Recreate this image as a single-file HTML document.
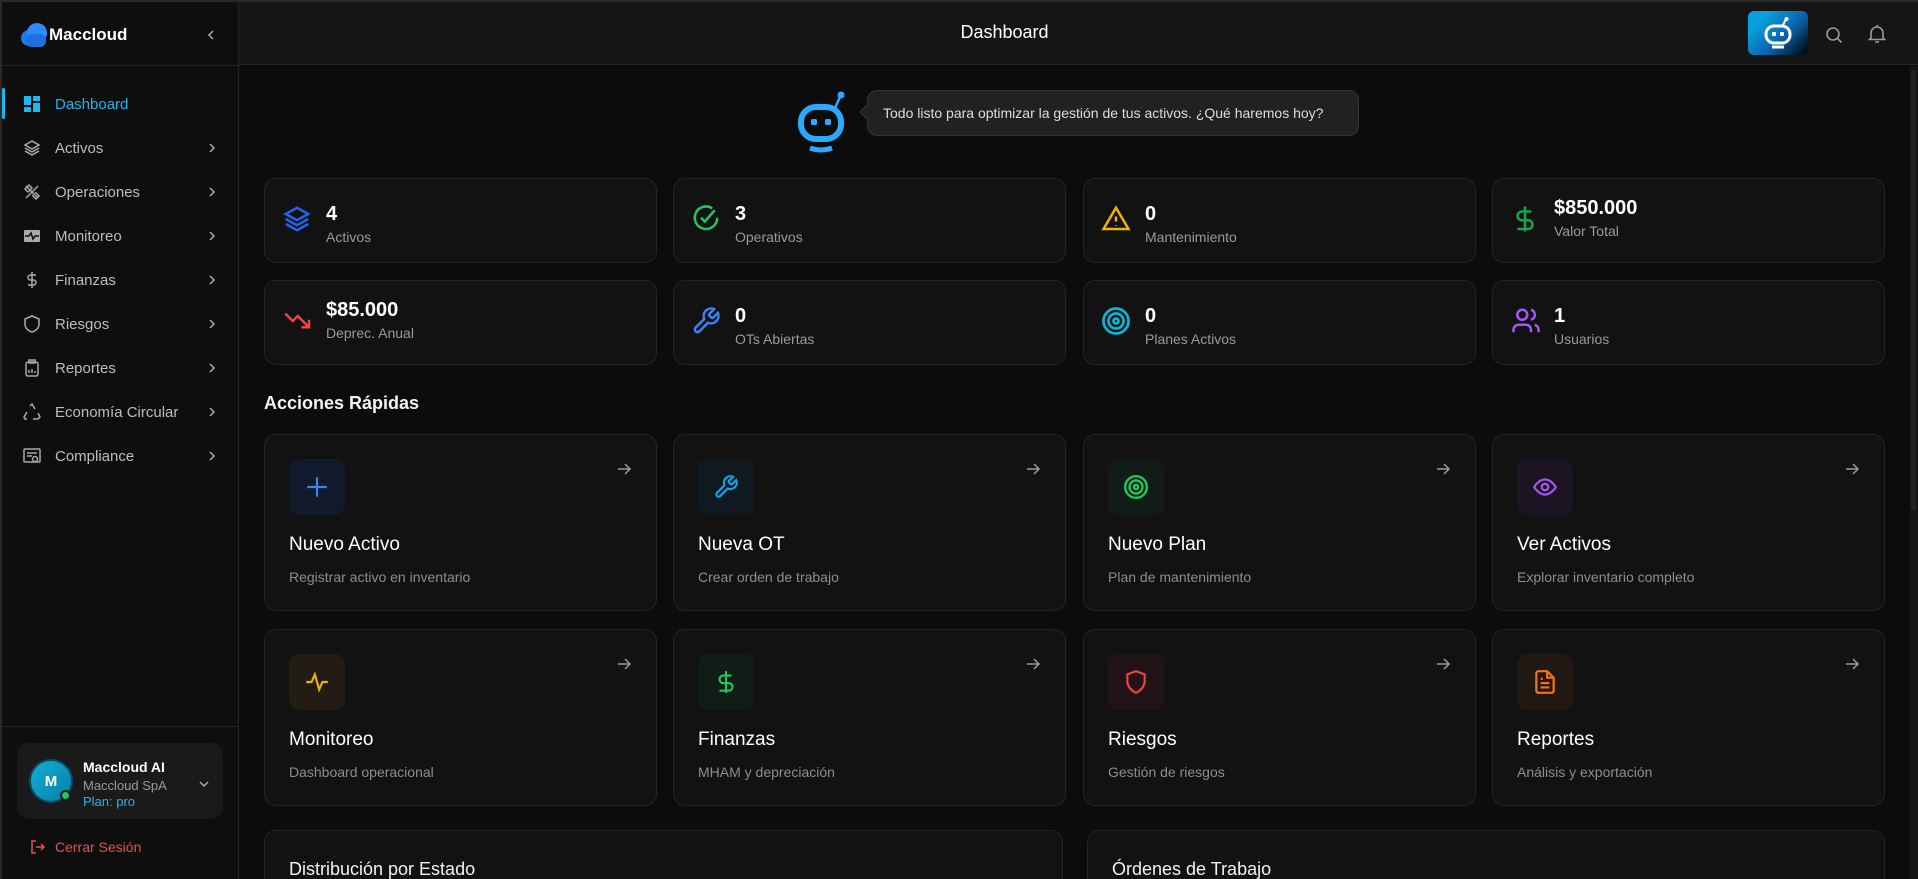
<!DOCTYPE html>
<html><head><meta charset="utf-8"><style>
*{box-sizing:border-box;margin:0;padding:0}
html,body{width:1918px;height:879px;overflow:hidden}
body{background:#0c0c0c;font-family:"Liberation Sans",sans-serif;color:#fff}
#wrap{position:relative;width:1918px;height:879px;overflow:hidden}
.abs{position:absolute}
#side{left:0;top:0;width:239px;height:879px;background:#0e0e0e;border-right:1px solid #222;border-top:2px solid #2a2a2a;border-left:2px solid #2a2a2a}
#hdr{left:239px;top:0;width:1679px;height:65px;background:#151515;border-bottom:1px solid #262626;border-top:2px solid #2a2a2a}
.nav{position:absolute;left:0;width:237px;height:40px;display:flex;align-items:center;font-size:15px;color:#bdbdbd}
.nav svg{position:absolute;left:21px}
.nav span{position:absolute;left:53px}
.nav .ch{position:absolute;left:204px}
.card{position:absolute;background:#121212;border:1px solid #242424;border-radius:12px}
.stat .num{position:absolute;left:61px;font-size:20px;font-weight:bold;color:#fff}
.stat .lbl{position:absolute;left:61px;font-size:14px;color:#9a9a9a}
.stat svg{position:absolute;left:17px;top:25px}
.act .ib{position:absolute;left:24px;top:24px;width:56px;height:56px;border-radius:10px;display:flex;align-items:center;justify-content:center}
.act .t{position:absolute;left:24px;top:99px;font-size:19px;color:#fff}
.act .d{position:absolute;left:24px;top:134px;font-size:14px;color:#8d8d8d}
.act .ar{position:absolute;right:24px;top:26px}
</style></head><body><div id="wrap">
<div id="side" class="abs">
  <svg class="abs" style="left:18px;top:20px" width="30" height="26" viewBox="0 0 30 26"><circle cx="9" cy="16" r="8" fill="#1a7cf0"/><circle cx="17" cy="11" r="10" fill="#2b8cff"/><rect x="6" y="12" width="20" height="13" rx="6" fill="#1e6fe0"/></svg>
  <div class="abs" style="left:47px;top:23px;font-size:17px;font-weight:bold">Maccloud</div>
  <svg class="abs" style="left:203px;top:27px" width="12" height="12" viewBox="0 0 12 12"><path d="M8 2L4 6l4 4" stroke="#aaa" stroke-width="1.5" fill="none"/></svg>
  <div class="abs" style="left:0;top:63px;width:237px;height:1px;background:#262626"></div>
  <div class="abs" style="left:0;top:86px;width:3px;height:31px;background:#1ab8f0;border-radius:2px"></div>
  <div class="nav" style="top:82px;color:#1ab8f0"><svg width="18" height="18" viewBox="0 0 18 18"><rect x="1" y="1" width="7" height="9" fill="#1ab8f0"/><rect x="10" y="1" width="7" height="5" fill="#1ab8f0"/><rect x="1" y="12" width="7" height="5" fill="#1ab8f0"/><rect x="10" y="8" width="7" height="9" fill="#1ab8f0"/></svg><span>Dashboard</span></div>
  <div class="nav" style="top:126px"><svg width="18" height="18" viewBox="0 0 18 18" fill="none" stroke="#aaa" stroke-width="1.5"><path d="M9 2L2 6l7 4 7-4zM2 9l7 4 7-4M2 12l7 4 7-4"/></svg><span>Activos</span><svg class="ch" width="12" height="12" viewBox="0 0 12 12"><path d="M4 2l4 4-4 4" stroke="#aaa" stroke-width="1.5" fill="none"/></svg></div>
  <div class="nav" style="top:170px"><svg width="18" height="18" viewBox="0 0 18 18" fill="none" stroke="#aaa" stroke-width="1.5"><path d="M3 3l12 12M15 3L3 15M2 6l4-4 3 3-4 4zM12 9l4 4-3 3-4-4"/></svg><span>Operaciones</span><svg class="ch" width="12" height="12" viewBox="0 0 12 12"><path d="M4 2l4 4-4 4" stroke="#aaa" stroke-width="1.5" fill="none"/></svg></div>
  <div class="nav" style="top:214px"><svg width="18" height="18" viewBox="0 0 18 18"><rect x="1" y="3" width="16" height="12" rx="1" fill="#aaa"/><path d="M2 9h4l2-3 2 6 2-3h4" stroke="#0e0e0e" stroke-width="1.5" fill="none"/></svg><span>Monitoreo</span><svg class="ch" width="12" height="12" viewBox="0 0 12 12"><path d="M4 2l4 4-4 4" stroke="#aaa" stroke-width="1.5" fill="none"/></svg></div>
  <div class="nav" style="top:258px"><svg width="18" height="18" viewBox="0 0 18 18" fill="none" stroke="#aaa" stroke-width="1.5"><path d="M9 1v16M13 4H7.5a2.5 2.5 0 000 5h3a2.5 2.5 0 010 5H5"/></svg><span>Finanzas</span><svg class="ch" width="12" height="12" viewBox="0 0 12 12"><path d="M4 2l4 4-4 4" stroke="#aaa" stroke-width="1.5" fill="none"/></svg></div>
  <div class="nav" style="top:302px"><svg width="18" height="18" viewBox="0 0 18 18" fill="none" stroke="#aaa" stroke-width="1.5"><path d="M9 1l7 3v5c0 4-3 7-7 8-4-1-7-4-7-8V4z"/></svg><span>Riesgos</span><svg class="ch" width="12" height="12" viewBox="0 0 12 12"><path d="M4 2l4 4-4 4" stroke="#aaa" stroke-width="1.5" fill="none"/></svg></div>
  <div class="nav" style="top:346px"><svg width="18" height="18" viewBox="0 0 18 18" fill="none" stroke="#aaa" stroke-width="1.5"><rect x="3" y="3" width="12" height="14" rx="2"/><rect x="6" y="1" width="6" height="3"/><path d="M6 14v-3M9 14v-4M12 14v-2"/></svg><span>Reportes</span><svg class="ch" width="12" height="12" viewBox="0 0 12 12"><path d="M4 2l4 4-4 4" stroke="#aaa" stroke-width="1.5" fill="none"/></svg></div>
  <div class="nav" style="top:390px"><svg width="18" height="18" viewBox="0 0 18 18" fill="none" stroke="#aaa" stroke-width="1.5"><path d="M7 3l2-2 3 5M15 10l2 4-2 2h-5M4 16H2l-1-2 3-5"/></svg><span>Economía Circular</span><svg class="ch" width="12" height="12" viewBox="0 0 12 12"><path d="M4 2l4 4-4 4" stroke="#aaa" stroke-width="1.5" fill="none"/></svg></div>
  <div class="nav" style="top:434px"><svg width="18" height="18" viewBox="0 0 18 18" fill="none" stroke="#aaa" stroke-width="1.5"><rect x="1" y="2" width="16" height="13" rx="1"/><path d="M4 6h10M4 9h5"/><circle cx="12" cy="12" r="2.5"/></svg><span>Compliance</span><svg class="ch" width="12" height="12" viewBox="0 0 12 12"><path d="M4 2l4 4-4 4" stroke="#aaa" stroke-width="1.5" fill="none"/></svg></div>
  <div class="abs" style="left:0;top:724px;width:237px;height:1px;background:#262626"></div>
  <div class="abs" style="left:15px;top:741px;width:206px;height:76px;background:#1a1a1a;border-radius:12px"></div>
  <div class="abs" style="left:27px;top:757px;width:44px;height:44px;border-radius:50%;background:linear-gradient(135deg,#0fb0d8,#0a7ea6);border:2px solid #0b4b60;font-size:15px;font-weight:bold;display:flex;align-items:center;justify-content:center">M</div>
  <div class="abs" style="left:58px;top:788px;width:11px;height:11px;border-radius:50%;background:#22c55e;border:2px solid #1a1a1a"></div>
  <div class="abs" style="left:81px;top:757px;font-size:14px;font-weight:bold">Maccloud AI</div>
  <div class="abs" style="left:81px;top:776px;font-size:13px;color:#999">Maccloud SpA</div>
  <div class="abs" style="left:81px;top:792px;font-size:13px;color:#1ab8f0">Plan: pro</div>
  <svg class="abs" style="left:196px;top:776px" width="12" height="12" viewBox="0 0 12 12"><path d="M2 4l4 4 4-4" stroke="#aaa" stroke-width="1.5" fill="none"/></svg>
  <svg class="abs" style="left:28px;top:837px" width="16" height="16" viewBox="0 0 16 16" fill="none" stroke="#e05252" stroke-width="1.5"><path d="M6 2H2v12h4M6 8h8M11 5l3 3-3 3"/></svg>
  <div class="abs" style="left:53px;top:837px;font-size:14px;color:#e05252">Cerrar Sesión</div>
</div>
<div id="hdr" class="abs">
  <div class="abs" style="left:0;width:1531px;top:20px;text-align:center;font-size:18px">Dashboard</div>
  <div class="abs" style="left:1509px;top:9px;width:60px;height:44px;border-radius:6px;background:linear-gradient(135deg,#0aa0e0 20%,#0a60a8 60%,#000 100%)"></div>
  <svg class="abs" style="left:1522px;top:13px" width="34" height="38" viewBox="0 0 34 38"><path d="M22 10l3-6" stroke="#fff" stroke-width="2"/><circle cx="25.5" cy="4" r="2" fill="#fff"/><rect x="5" y="11" width="24" height="17" rx="8" fill="none" stroke="#fff" stroke-width="3"/><rect x="11" y="17" width="4" height="4" rx="1" fill="#fff"/><rect x="19" y="17" width="4" height="4" rx="1" fill="#fff"/><path d="M11 32h12" stroke="#fff" stroke-width="3"/></svg>
  <svg class="abs" style="left:1585px;top:23px" width="20" height="20" viewBox="0 0 20 20" fill="none" stroke="#999" stroke-width="1.6"><circle cx="9" cy="9" r="6"/><path d="M13.5 13.5l4 4"/></svg>
  <svg class="abs" style="left:1629px;top:22px" width="18" height="20" viewBox="0 0 18 20" fill="none" stroke="#999" stroke-width="1.6"><path d="M3 14V9a6 6 0 0112 0v5l1.5 1.5h-15zM7 18h4M9 1v2"/></svg>
</div>
<div class="abs" style="left:1910px;top:66px;width:8px;height:813px;background:#151515"></div>
<div class="abs" style="left:1911px;top:70px;width:5px;height:440px;background:#222;border-radius:3px"></div>
<svg class="abs" style="left:795px;top:86px" width="56" height="70" viewBox="0 0 56 70"><path d="M40 22l5-11" stroke="#2ea8ff" stroke-width="2.5"/><circle cx="46" cy="9" r="3.5" fill="#2ea8ff"/><rect x="6" y="21" width="40" height="32" rx="15" fill="none" stroke="#2ea8ff" stroke-width="6"/><rect x="16" y="33" width="6" height="6" rx="1.5" fill="#2ea8ff"/><rect x="30" y="33" width="6" height="6" rx="1.5" fill="#2ea8ff"/><path d="M15 62q11 4 22 0" stroke="#2ea8ff" stroke-width="5" fill="none"/></svg>
<div class="abs" style="left:867px;top:90px;width:492px;height:46px;background:#212121;border:1px solid #333;border-radius:10px;font-size:14px;color:#ddd;line-height:44px;padding-left:15px">Todo listo para optimizar la gestión de tus activos. ¿Qué haremos hoy?</div>
<div class="abs" style="left:861px;top:107px;width:10px;height:10px;background:#212121;transform:rotate(45deg);border-left:1px solid #333;border-bottom:1px solid #333"></div>
<div class="card stat" style="left:264px;top:178px;width:393px;height:85px"><svg width="30" height="30" viewBox="0 0 24 24" fill="none" stroke="#2563eb" stroke-width="2"><path d="M12 3L3 8l9 5 9-5zM3 12l9 5 9-5M3 16l9 5 9-5"/></svg><div class="num" style="top:24px">4</div><div class="lbl" style="top:50px">Activos</div></div>
<div class="card stat" style="left:673px;top:178px;width:393px;height:85px"><svg width="30" height="30" viewBox="0 0 24 24" fill="none" stroke="#22c55e" stroke-width="2"><path d="M21 11a9 9 0 11-4-7.5"/><path d="M8 11l3 3 8-9"/></svg><div class="num" style="top:24px">3</div><div class="lbl" style="top:50px">Operativos</div></div>
<div class="card stat" style="left:1083px;top:178px;width:393px;height:85px"><svg width="30" height="30" viewBox="0 0 24 24" fill="none" stroke="#eab308" stroke-width="2"><path d="M12 3l10 17H2zM12 10v4M12 17v.5"/></svg><div class="num" style="top:24px">0</div><div class="lbl" style="top:50px">Mantenimiento</div></div>
<div class="card stat" style="left:1492px;top:178px;width:393px;height:85px"><svg width="30" height="30" viewBox="0 0 24 24" fill="none" stroke="#16a34a" stroke-width="2"><path d="M12 2v20M17 6H9.5a3.5 3.5 0 000 7h5a3.5 3.5 0 010 7H6"/></svg><div class="num" style="top:18px">$850.000</div><div class="lbl" style="top:44px">Valor Total</div></div>
<div class="card stat" style="left:264px;top:280px;width:393px;height:85px"><svg width="34" height="30" viewBox="0 0 24 24" fill="none" stroke="#ef4444" stroke-width="2"><path d="M1 6l6 6 4-4 9 9M20 11v6h-6"/></svg><div class="num" style="top:18px">$85.000</div><div class="lbl" style="top:44px">Deprec. Anual</div></div>
<div class="card stat" style="left:673px;top:280px;width:393px;height:85px"><svg width="30" height="30" viewBox="0 0 24 24" fill="none" stroke="#3b82f6" stroke-width="2"><path d="M14.7 6.3a1 1 0 000 1.4l1.6 1.6a1 1 0 001.4 0l3.8-3.8a6 6 0 01-7.9 7.9l-6.9 6.9a2.1 2.1 0 01-3-3l6.9-6.9a6 6 0 017.9-7.9z"/></svg><div class="num" style="top:24px">0</div><div class="lbl" style="top:50px">OTs Abiertas</div></div>
<div class="card stat" style="left:1083px;top:280px;width:393px;height:85px"><svg width="30" height="30" viewBox="0 0 24 24" fill="none" stroke="#06b6d4" stroke-width="2.2"><circle cx="12" cy="12" r="10"/><circle cx="12" cy="12" r="6"/><circle cx="12" cy="12" r="2"/></svg><div class="num" style="top:24px">0</div><div class="lbl" style="top:50px">Planes Activos</div></div>
<div class="card stat" style="left:1492px;top:280px;width:393px;height:85px"><svg width="32" height="30" viewBox="0 0 24 24" fill="none" stroke="#a855f7" stroke-width="2"><circle cx="9" cy="7" r="4"/><path d="M2 21v-2a4 4 0 014-4h6a4 4 0 014 4v2M16 3.1a4 4 0 010 7.8M22 21v-2a4 4 0 00-3-3.9"/></svg><div class="num" style="top:24px">1</div><div class="lbl" style="top:50px">Usuarios</div></div>
<div class="abs" style="left:264px;top:393px;font-size:18px;font-weight:bold;color:#f2f2f2">Acciones Rápidas</div>
<div class="card act" style="left:264px;top:434px;width:393px;height:177px"><div class="ib" style="background:#111a2a"><svg width="26" height="26" viewBox="0 0 24 24" stroke="#3b82f6" stroke-width="2"><path d="M12 3v18M3 12h18"/></svg></div><div class="t">Nuevo Activo</div><div class="d">Registrar activo en inventario</div><svg class="ar" width="16" height="16" viewBox="0 0 16 16" fill="none" stroke="#999" stroke-width="1.5"><path d="M2 8h12M9 3l5 5-5 5"/></svg></div>
<div class="card act" style="left:673px;top:434px;width:393px;height:177px"><div class="ib" style="background:#10191f"><svg width="26" height="26" viewBox="0 0 24 24" fill="none" stroke="#0ea5e9" stroke-width="2"><path d="M14.7 6.3a1 1 0 000 1.4l1.6 1.6a1 1 0 001.4 0l3.8-3.8a6 6 0 01-7.9 7.9l-6.9 6.9a2.1 2.1 0 01-3-3l6.9-6.9a6 6 0 017.9-7.9z"/></svg></div><div class="t">Nueva OT</div><div class="d">Crear orden de trabajo</div><svg class="ar" width="16" height="16" viewBox="0 0 16 16" fill="none" stroke="#999" stroke-width="1.5"><path d="M2 8h12M9 3l5 5-5 5"/></svg></div>
<div class="card act" style="left:1083px;top:434px;width:393px;height:177px"><div class="ib" style="background:#121c16"><svg width="26" height="26" viewBox="0 0 24 24" fill="none" stroke="#22c55e" stroke-width="2.2"><circle cx="12" cy="12" r="10"/><circle cx="12" cy="12" r="6"/><circle cx="12" cy="12" r="2"/></svg></div><div class="t">Nuevo Plan</div><div class="d">Plan de mantenimiento</div><svg class="ar" width="16" height="16" viewBox="0 0 16 16" fill="none" stroke="#999" stroke-width="1.5"><path d="M2 8h12M9 3l5 5-5 5"/></svg></div>
<div class="card act" style="left:1492px;top:434px;width:393px;height:177px"><div class="ib" style="background:#1c1422"><svg width="26" height="26" viewBox="0 0 24 24" fill="none" stroke="#a855f7" stroke-width="2"><path d="M2 12s4-7 10-7 10 7 10 7-4 7-10 7S2 12 2 12z"/><circle cx="12" cy="12" r="3"/></svg></div><div class="t">Ver Activos</div><div class="d">Explorar inventario completo</div><svg class="ar" width="16" height="16" viewBox="0 0 16 16" fill="none" stroke="#999" stroke-width="1.5"><path d="M2 8h12M9 3l5 5-5 5"/></svg></div>
<div class="card act" style="left:264px;top:629px;width:393px;height:177px"><div class="ib" style="background:#221c14"><svg width="26" height="26" viewBox="0 0 24 24" fill="none" stroke="#eab308" stroke-width="2"><path d="M2 12h5l3-7 4 14 3-7h5"/></svg></div><div class="t">Monitoreo</div><div class="d">Dashboard operacional</div><svg class="ar" width="16" height="16" viewBox="0 0 16 16" fill="none" stroke="#999" stroke-width="1.5"><path d="M2 8h12M9 3l5 5-5 5"/></svg></div>
<div class="card act" style="left:673px;top:629px;width:393px;height:177px"><div class="ib" style="background:#121c16"><svg width="26" height="26" viewBox="0 0 24 24" fill="none" stroke="#22c55e" stroke-width="2"><path d="M12 2v20M17 6H9.5a3.5 3.5 0 000 7h5a3.5 3.5 0 010 7H6"/></svg></div><div class="t">Finanzas</div><div class="d">MHAM y depreciación</div><svg class="ar" width="16" height="16" viewBox="0 0 16 16" fill="none" stroke="#999" stroke-width="1.5"><path d="M2 8h12M9 3l5 5-5 5"/></svg></div>
<div class="card act" style="left:1083px;top:629px;width:393px;height:177px"><div class="ib" style="background:#221416"><svg width="26" height="26" viewBox="0 0 24 24" fill="none" stroke="#ef4444" stroke-width="2"><path d="M12 2l8 3v6c0 5-3.5 9-8 11-4.5-2-8-6-8-11V5z"/></svg></div><div class="t">Riesgos</div><div class="d">Gestión de riesgos</div><svg class="ar" width="16" height="16" viewBox="0 0 16 16" fill="none" stroke="#999" stroke-width="1.5"><path d="M2 8h12M9 3l5 5-5 5"/></svg></div>
<div class="card act" style="left:1492px;top:629px;width:393px;height:177px"><div class="ib" style="background:#221813"><svg width="26" height="26" viewBox="0 0 24 24" fill="none" stroke="#f97316" stroke-width="2"><path d="M14 2H6a2 2 0 00-2 2v16a2 2 0 002 2h12a2 2 0 002-2V8z M14 2v6h6M8 13h8M8 17h8M8 9h2"/></svg></div><div class="t">Reportes</div><div class="d">Análisis y exportación</div><svg class="ar" width="16" height="16" viewBox="0 0 16 16" fill="none" stroke="#999" stroke-width="1.5"><path d="M2 8h12M9 3l5 5-5 5"/></svg></div>
<div class="card" style="left:264px;top:830px;width:799px;height:80px"><div class="abs" style="left:24px;top:28px;font-size:18px;color:#f2f2f2">Distribución por Estado</div></div>
<div class="card" style="left:1087px;top:830px;width:798px;height:80px"><div class="abs" style="left:24px;top:28px;font-size:18px;color:#f2f2f2">Órdenes de Trabajo</div></div>
</div></body></html>
